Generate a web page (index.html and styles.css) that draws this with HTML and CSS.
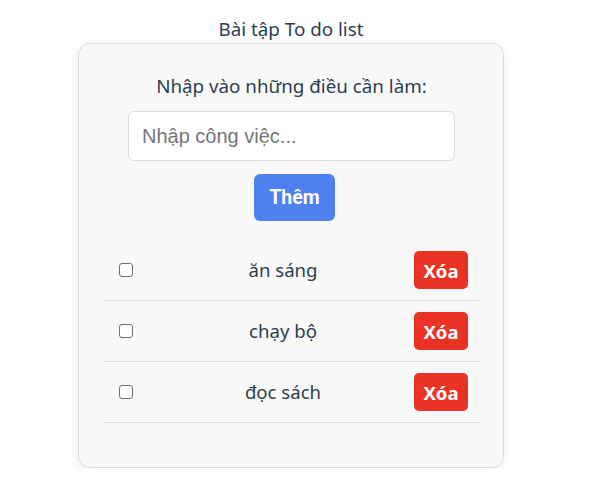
FILE: index.html
```html
<!DOCTYPE html>
<html lang="vi">
<head>
<meta charset="utf-8">
<title>Bài tập To do list</title>
<link rel="stylesheet" href="styles.css">
</head>
<body>
<div class="page">
  <h1 class="title">Bài tập To do list</h1>
  <div class="card">
    <p class="label">Nhập vào những điều cần làm:</p>
    <input class="task-input" type="text" placeholder="Nhập công việc...">
    <button class="add-btn" type="button">Thêm</button>
    <ul class="list">
      <li class="item">
        <input class="check" type="checkbox">
        <span class="item-text">ăn sáng</span>
        <button class="del-btn" type="button">Xóa</button>
      </li>
      <li class="item">
        <input class="check" type="checkbox">
        <span class="item-text">chạy bộ</span>
        <button class="del-btn" type="button">Xóa</button>
      </li>
      <li class="item">
        <input class="check" type="checkbox">
        <span class="item-text">đọc sách</span>
        <button class="del-btn" type="button">Xóa</button>
      </li>
    </ul>
  </div>
</div>
</body>
</html>
```

FILE: styles.css
```css
html, body {
  margin: 0;
  padding: 0;
  background: #ffffff;
}

body {
  font-family: "Noto Sans", "Open Sans", sans-serif;
  color: #2c3e50;
}

.page {
  width: 582px;
  display: flex;
  flex-direction: column;
  align-items: center;
}

.title {
  margin: 0;
  padding-top: 16px;
  font-size: 18.8px;
  line-height: 26px;
  font-weight: 400;
}

.card {
  margin-top: 1px;
  width: 426px;
  box-sizing: border-box;
  border: 1px solid #dcdcdc;
  border-radius: 12px;
  background: #f9f9f9;
  box-shadow: 0 2px 10px rgba(0, 0, 0, 0.08);
  padding: 29px 24px 44px 25px;
  display: flex;
  flex-direction: column;
  align-items: center;
}

.label {
  margin: 0;
  font-size: 18.8px;
  line-height: 26px;
}

.task-input {
  margin-top: 12px;
  width: 327px;
  height: 50px;
  box-sizing: border-box;
  border: 1px solid #dadada;
  border-radius: 6px;
  background: #ffffff;
  padding: 0 13px;
  font-family: "Liberation Sans", Arial, sans-serif;
  font-size: 20px;
  color: #2c3e50;
  outline: none;
}

.task-input::placeholder {
  color: #767676;
}

.add-btn {
  margin: 13px 0 0 6px;
  width: 81px;
  height: 47px;
  border: none;
  border-radius: 6px;
  background: #4f80ef;
  color: #ffffff;
  font-family: "Roboto", "Noto Sans", sans-serif;
  font-weight: 700;
  font-size: 19.5px;
  padding: 0;
}

.list {
  list-style: none;
  margin: 19px 0 0 0;
  padding: 0;
  width: 375px;
}

.item {
  display: flex;
  align-items: center;
  padding: 11px 11px;
  border-bottom: 1px solid #dedede;
}

.check {
  appearance: none;
  -webkit-appearance: none;
  margin: 0 0 0 4px;
  width: 14px;
  height: 14px;
  box-sizing: border-box;
  border: 1px solid #707070;
  border-radius: 3px;
  background: #ffffff;
}

.item-text {
  flex: 1;
  text-align: center;
  margin-left: 19px;
  font-size: 18.6px;
  line-height: 26px;
}

.del-btn {
  width: 54px;
  height: 38px;
  border: none;
  border-radius: 5px;
  background: #ea3325;
  color: #ffffff;
  font-family: "Noto Sans", sans-serif;
  font-weight: 700;
  font-size: 18.5px;
  padding: 0;
}
```
